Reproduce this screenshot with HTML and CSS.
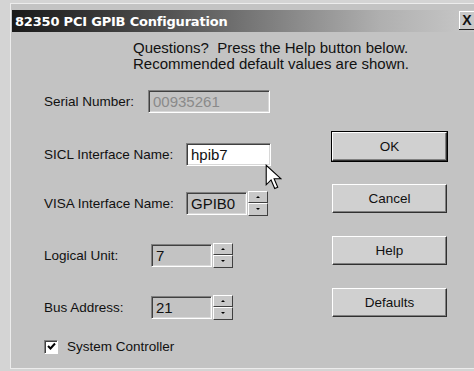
FILE: index.html
```html
<!DOCTYPE html>
<html lang="en">
<head>
    <meta charset="UTF-8">
    <title>82350 PCI GPIB Configuration</title>
    <link rel="stylesheet" href="styles.css">
</head>
<body>

<div class="window">
    <div class="titlebar">
        <span class="title">82350 PCI GPIB Configuration</span>
        <span class="close">X</span>
    </div>

    <div class="content">
        <p class="note">Questions?&nbsp; Press the Help button below.<br>Recommended default values are shown.</p>

        <div class="main">
            <div class="form">
                <div class="row row-serial">
                    <label>Serial Number:</label>
                    <div class="field disabled f-serial">00935261</div>
                </div>

                <div class="row row-sicl">
                    <label>SICL Interface Name:</label>
                    <div class="field white f-sicl">hpib7</div>
                    <svg class="cursor" width="17" height="27" viewBox="0 0 14 22">
                        <path d="M1 1 L1 17 L5 13 L8 20 L10.5 19 L7.5 12 L13 12 Z" fill="#fff" stroke="#000" stroke-width="0.9"/>
                    </svg>
                </div>

                <div class="row row-visa">
                    <label>VISA Interface Name:</label>
                    <div class="field f-visa">GPIB0</div>
                    <div class="spin"><span class="up"></span><span class="down"></span></div>
                </div>

                <div class="row row-unit">
                    <label>Logical Unit:</label>
                    <div class="field f-num">7</div>
                    <div class="spin"><span class="up"></span><span class="down"></span></div>
                </div>

                <div class="row row-bus">
                    <label>Bus Address:</label>
                    <div class="field f-num">21</div>
                    <div class="spin"><span class="up"></span><span class="down"></span></div>
                </div>

                <div class="check">
                    <span class="box">
                        <svg width="9" height="9" viewBox="0 0 9 9"><path d="M1 4 L3.5 6.5 L8 1.5" fill="none" stroke="#000" stroke-width="2"/></svg>
                    </span>
                    <span>System Controller</span>
                </div>
            </div>

            <div class="buttons">
                <button class="btn default">OK</button>
                <button class="btn">Cancel</button>
                <button class="btn">Help</button>
                <button class="btn">Defaults</button>
            </div>
        </div>
    </div>
</div>

</body>
</html>
```

FILE: styles.css
```css
body{
    margin: 0;
    background-color: #d4d4d4;
    font-family: "Liberation Sans", Arial, sans-serif;
    font-size: 13.5px;
    color: #111;
    overflow: hidden;
}

.window{
    margin: 3px 0 0 10px;
    height: 366px;
    background-color: #c3c3c3;
    border-top: 1px solid #ececec;
    border-left: 1px solid #ececec;
    border-bottom: 1px solid #ececec;
    padding: 6px 0 0 1px;
    box-sizing: border-box;
}

.titlebar{
    height: 22px;
    display: flex;
    align-items: center;
    justify-content: space-between;
    background: linear-gradient(to right, #1a1a1a 0%, #4a4a4a 30%, #b0b0b0 80%, #c8c8c8 100%);
    padding-left: 3px;
}

.title{
    font-family: "DejaVu Sans", sans-serif;
    font-weight: bold;
    font-size: 13px;
    color: #fff;
    letter-spacing: -0.2px;
}

.close{
    width: 14px;
    height: 17px;
    margin-top: -2px;
    background-color: #c8c8c8;
    border-top: 1px solid #fff;
    border-left: 1px solid #fff;
    box-shadow: 0 1px 0 #222;
    font-weight: bold;
    font-size: 14px;
    text-align: center;
    line-height: 17px;
}

.content{
    padding: 8px 0 0 32px;
}

.note{
    margin: 0 0 0 89px;
    font-size: 15px;
    line-height: 16px;
}

.main{
    display: flex;
}

.form{
    width: 270px;
    padding-top: 17px;
}

.row{
    display: flex;
    align-items: center;
    height: 24px;
    position: relative;
}

.row label{
    width: 104px;
    white-space: nowrap;
}

.row-sicl label, .row-visa label{ width: 142px; }
.row-unit label, .row-bus label{ width: 107px; }

.row-sicl{ margin-top: 29px; }
.row-visa{ margin-top: 25px; }
.row-unit{ margin-top: 28px; }
.row-bus{ margin-top: 28px; }

.field{
    height: 23px;
    box-sizing: border-box;
    border-top: 1px solid #808080;
    border-left: 1px solid #808080;
    border-bottom: 1px solid #fff;
    border-right: 1px solid #fff;
    box-shadow: inset 1px 1px 0 #404040, inset -1px -1px 0 #d8d8d8;
    padding: 2px 0 0 4px;
    font-size: 15px;
    background-color: #c3c3c3;
}

.field.white{ background-color: #fff; }
.field.disabled{ color: #8a8a8a; }

.f-serial{ width: 122px; }
.f-sicl{ width: 85px; }
.f-visa{ width: 61px; }
.f-num{ width: 61px; }

.cursor{
    position: absolute;
    left: 221px;
    top: 22px;
}

.spin{
    display: flex;
    flex-direction: column;
    margin-left: 1px;
    height: 25px;
}

.spin span{
    width: 20px;
    height: 12px;
    box-sizing: border-box;
    background-color: #c8c8c8;
    border-top: 1px solid #fff;
    border-left: 1px solid #fff;
    border-bottom: 1px solid #404040;
    border-right: 1px solid #404040;
    position: relative;
}

.spin span + span{ height: 13px; }

.spin span::after{
    content: "";
    position: absolute;
    left: 7px;
    top: 4px;
    border-left: 2px solid transparent;
    border-right: 2px solid transparent;
}

.spin .up::after{ border-bottom: 2px solid #000; }
.spin .down::after{ border-top: 2px solid #000; }

.check{
    display: flex;
    align-items: center;
    margin-top: 20px;
}

.check .box{
    width: 14px;
    height: 14px;
    box-sizing: border-box;
    background-color: #fff;
    border-top: 1px solid #808080;
    border-left: 1px solid #808080;
    border-bottom: 1px solid #fff;
    border-right: 1px solid #fff;
    box-shadow: inset 1px 1px 0 #404040;
    display: flex;
    align-items: center;
    justify-content: center;
    margin-right: 9px;
}

.buttons{
    display: flex;
    flex-direction: column;
    margin-left: 18px;
    padding-top: 60px;
    gap: 23px;
}

.btn{
    width: 115px;
    height: 29px;
    font-family: "Liberation Sans", Arial, sans-serif;
    font-size: 13.5px;
    color: #111;
    background-color: #d0d0d0;
    border-top: 1px solid #fff;
    border-left: 1px solid #fff;
    border-bottom: 1px solid #303030;
    border-right: 1px solid #303030;
    box-shadow: inset -1px -1px 0 #808080;
    padding: 0;
}

.btn.default{
    outline: 1px solid #000;
}
```
